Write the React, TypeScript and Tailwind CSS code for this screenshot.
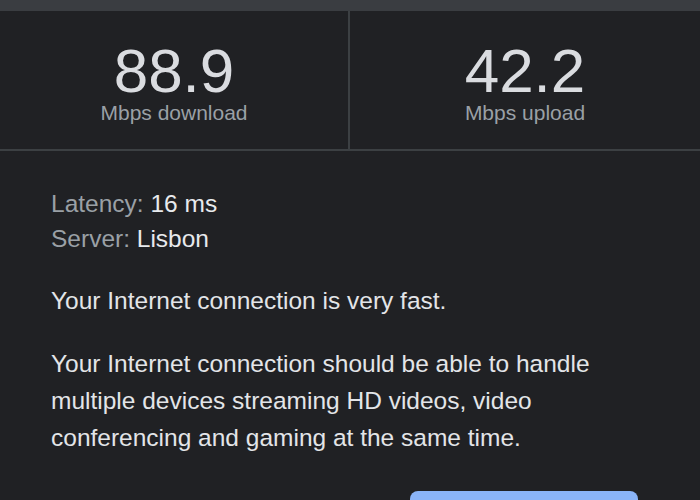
const stats = [
  { value: "88.9", label: "Mbps download" },
  { value: "42.2", label: "Mbps upload" },
];

export default function App() {
  return (
    <div
      className="h-[500px] w-[700px] overflow-hidden bg-[#202124] text-[#e8eaed]"
      style={{ fontFamily: '"Liberation Sans", Arial, sans-serif' }}
    >
      <div className="h-[11px] bg-[#3a3d41]" />

      <div className="grid h-[140px] grid-cols-[350px_350px] border-b-2 border-[#3c4043]">
        {stats.map((s, i) => (
          <div
            key={s.label}
            className={
              i === 0
                ? "flex flex-col items-center border-r-2 border-[#3c4043] pt-[30px]"
                : "flex flex-col items-center pt-[30px]"
            }
          >
            <div className="text-[62px] leading-[60px] text-[#dadce0]">{s.value}</div>
            <div className="text-[21px] leading-[24px] text-[#9aa0a6]">{s.label}</div>
          </div>
        ))}
      </div>

      <div className="pl-[51px] pr-[51px] pt-[35px] text-[24.5px]">
        <div className="leading-[35px]">
          <div>
            <span className="text-[#9aa0a6]">Latency: </span>
            <span className="text-[#e8eaed]">16 ms</span>
          </div>
          <div>
            <span className="text-[#9aa0a6]">Server: </span>
            <span className="text-[#e8eaed]">Lisbon</span>
          </div>
        </div>

        <p className="mt-[26px] leading-[37px] text-[#e3e5e8]">
          Your Internet connection is very fast.
        </p>
        <p className="mt-[26px] leading-[37px] text-[#e3e5e8]">
          Your Internet connection should be able to handle multiple devices streaming HD
          videos, video conferencing and gaming at the same time.
        </p>
      </div>

      <div className="mt-[35px] flex justify-end pr-[62px]">
        <button className="h-[40px] w-[228px] rounded-lg bg-[#8ab4f8]" aria-label="Test again" />
      </div>
    </div>
  );
}
